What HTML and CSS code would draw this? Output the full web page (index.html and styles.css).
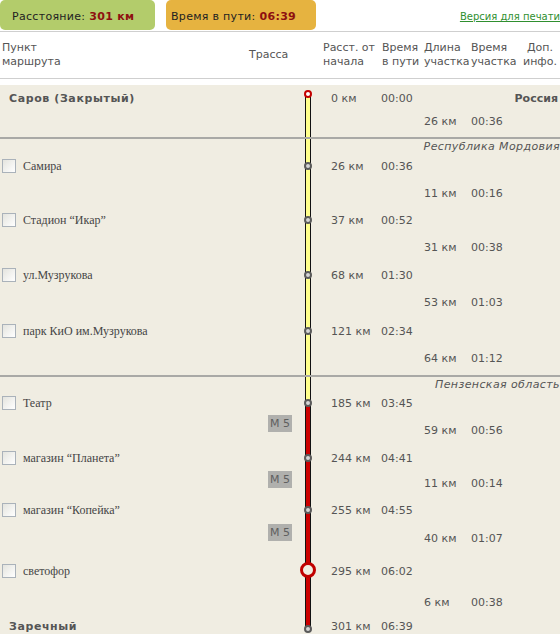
FILE: index.html
```html
<!DOCTYPE html>
<html lang="ru">
<head>
<meta charset="utf-8">
<title>Маршрут</title>
<link rel="stylesheet" href="styles.css">
</head>
<body>
<div class="page">
  <div class="top">
    <div class="pill pill-green">Расстояние: <b>301 км</b></div>
    <div class="pill pill-orange">Время в пути: <b>06:39</b></div>
    <a class="print" href="#">Версия для печати</a>
  </div>

  <div class="head">
    <div class="h-name">Пункт<br>маршрута</div>
    <div class="h-track">Трасса</div>
    <div>Расст. от<br>начала</div>
    <div class="h-time">Время<br>в пути</div>
    <div>Длина<br>участка</div>
    <div>Время<br>участка</div>
    <div class="h-info">Доп.<br>инфо.</div>
  </div>

  <div class="body">
    <div class="row h26">
      <div class="name bold">Саров (Закрытый)</div>
      <div class="track"><span class="rail start"><i class="mk mk-start"></i></span></div>
      <div class="dist">0 км</div><div class="time">00:00</div>
      <div class="country">Россия</div>
    </div>
    <div class="row h20">
      <div class="track"><span class="rail y"></span></div>
      <div class="slen">26 км</div><div class="stime">00:36</div>
    </div>
    <div class="row sep h8">
      <div class="track"><span class="rail y"></span></div>
    </div>
    <div class="row h15">
      <div class="track"><span class="rail y"></span></div>
      <div class="region">Республика Мордовия</div>
    </div>

    <div class="row h24">
      <div class="name"><span class="cb"></span>Самира</div>
      <div class="track"><span class="rail y"><i class="mk"></i></span></div>
      <div class="dist">26 км</div><div class="time">00:36</div>
    </div>
    <div class="row h30">
      <div class="track"><span class="rail y"></span></div>
      <div class="slen">11 км</div><div class="stime">00:16</div>
    </div>

    <div class="row h24">
      <div class="name"><span class="cb"></span>Стадион “Икар”</div>
      <div class="track"><span class="rail y"><i class="mk"></i></span></div>
      <div class="dist">37 км</div><div class="time">00:52</div>
    </div>
    <div class="row h30">
      <div class="track"><span class="rail y"></span></div>
      <div class="slen">31 км</div><div class="stime">00:38</div>
    </div>

    <div class="row h26">
      <div class="name"><span class="cb"></span>ул.Музрукова</div>
      <div class="track"><span class="rail y"><i class="mk"></i></span></div>
      <div class="dist">68 км</div><div class="time">01:30</div>
    </div>
    <div class="row h28">
      <div class="track"><span class="rail y"></span></div>
      <div class="slen">53 км</div><div class="stime">01:03</div>
    </div>

    <div class="row h30">
      <div class="name"><span class="cb"></span>парк КиО им.Музрукова</div>
      <div class="track"><span class="rail y"><i class="mk"></i></span></div>
      <div class="dist">121 км</div><div class="time">02:34</div>
    </div>
    <div class="row h24">
      <div class="track"><span class="rail y"></span></div>
      <div class="slen">64 км</div><div class="stime">01:12</div>
    </div>
    <div class="row sep h7">
      <div class="track"><span class="rail y"></span></div>
    </div>
    <div class="row h14">
      <div class="track"><span class="rail y"></span></div>
      <div class="region">Пензенская область</div>
    </div>

    <div class="row h24">
      <div class="name"><span class="cb"></span>Театр</div>
      <div class="track"><span class="rail yr"><i class="mk"></i></span></div>
      <div class="dist">185 км</div><div class="time">03:45</div>
    </div>
    <div class="row h30">
      <div class="track"><span class="badge">M 5</span><span class="rail r"></span></div>
      <div class="slen">59 км</div><div class="stime">00:56</div>
    </div>

    <div class="row h26">
      <div class="name"><span class="cb"></span>магазин “Планета”</div>
      <div class="track"><span class="rail r"><i class="mk"></i></span></div>
      <div class="dist">244 км</div><div class="time">04:41</div>
    </div>
    <div class="row h25">
      <div class="track"><span class="badge">M 5</span><span class="rail r"></span></div>
      <div class="slen">11 км</div><div class="stime">00:14</div>
    </div>

    <div class="row h28">
      <div class="name"><span class="cb"></span>магазин “Копейка”</div>
      <div class="track"><span class="rail r"><i class="mk"></i></span></div>
      <div class="dist">255 км</div><div class="time">04:55</div>
    </div>
    <div class="row h28">
      <div class="track"><span class="badge">M 5</span><span class="rail r"></span></div>
      <div class="slen">40 км</div><div class="stime">01:07</div>
    </div>

    <div class="row h38">
      <div class="name"><span class="cb"></span>светофор</div>
      <div class="track"><span class="rail r"><i class="mk mk-big"></i></span></div>
      <div class="dist">295 км</div><div class="time">06:02</div>
    </div>
    <div class="row h24">
      <div class="track"><span class="rail r"></span></div>
      <div class="slen">6 км</div><div class="stime">00:38</div>
    </div>

    <div class="row h24">
      <div class="name bold">Заречный</div>
      <div class="track"><span class="rail end"><i class="mk mk-end"></i></span></div>
      <div class="dist">301 км</div><div class="time">06:39</div>
    </div>
  </div>
</div>
</body>
</html>
```

FILE: styles.css
```css
html, body {
  margin: 0;
  padding: 0;
  overflow: hidden;
  background: #ffffff;
}

body {
  font-family: "DejaVu Sans", Verdana, sans-serif;
  font-size: 11px;
  color: #555555;
}

.page {
  width: 562px;
}

/* ---------- top bar ---------- */
.top {
  display: flex;
  height: 31px;
  border-bottom: 1px solid #cfcfcf;
}

.pill {
  height: 30px;
  box-sizing: border-box;
  display: flex;
  align-items: center;
  padding-top: 2px;
  border-radius: 5px;
  color: #222222;
  letter-spacing: 0.3px;
  white-space: nowrap;
}

.pill b {
  color: #8e1010;
  margin-left: 4px;
}

.pill-green {
  width: 155px;
  padding-left: 12px;
  background: #b3cc6b;
}

.pill-orange {
  width: 150px;
  margin-left: 11px;
  padding-left: 5px;
  background: #e6b340;
}

.print {
  margin-left: auto;
  padding-top: 11px;
  padding-right: 2px;
  font-size: 10px;
  color: #2f8f2f;
  text-decoration: underline;
  white-space: nowrap;
}

/* ---------- header ---------- */
.head {
  display: grid;
  grid-template-columns: 249px 74px 58px 43px 47px 47px 44px;
  height: 46px;
  align-items: center;
  line-height: 14px;
  border-bottom: 1px solid #cfcfcf;
  white-space: nowrap;
}

.h-name {
  padding-left: 2px;
}

.h-time {
  padding-left: 1px;
}

.h-info {
  text-align: center;
}

/* ---------- body ---------- */
.body {
  margin-top: 6px;
  background: #f0ede2;
}

.row {
  display: grid;
  grid-template-columns: 265px 58px 58px 43px 47px 61px 30px;
  align-items: center;
  white-space: nowrap;
}

.h7 { height: 5px; }
.h8 { height: 6px; }
.h14 { height: 14px; }
.h15 { height: 15px; }
.h20 { height: 20px; }
.h24 { height: 24px; }
.h25 { height: 25px; }
.h26 { height: 26px; }
.h28 { height: 28px; }
.h30 { height: 30px; }
.h38 { height: 38px; }

.sep {
  border-bottom: 2px solid #a9a9a6;
}

.name {
  grid-column: 1;
  display: flex;
  align-items: center;
  gap: 7px;
  padding-left: 2px;
  font-family: "Liberation Serif", "Times New Roman", serif;
  font-size: 12px;
  color: #454545;
}

.name.bold {
  padding-left: 9px;
  font-family: "DejaVu Sans", Verdana, sans-serif;
  font-size: 11px;
  font-weight: bold;
  letter-spacing: 0.6px;
  color: #555555;
}

.cb {
  width: 14px;
  height: 14px;
  box-sizing: border-box;
  border: 1px solid #aab2ba;
  background: linear-gradient(135deg, #e4e4de, #ffffff);
  flex: none;
}

.track {
  grid-column: 2;
  grid-row: 1;
  align-self: stretch;
  display: grid;
  grid-template-columns: 40px 6px;
}

.badge {
  grid-column: 1;
  align-self: start;
  justify-self: start;
  margin-left: 3px;
  width: 24px;
  height: 17px;
  line-height: 17px;
  text-align: center;
  background: #b0b0ad;
  color: #5f5f5f;
}

.rail {
  grid-column: 2;
  position: relative;
  --ylw: linear-gradient(to right, #111 0 1px, #ffff8c 1px 5px, #111 5px 6px);
  --red: linear-gradient(to right, #111 0 1px, #cc0000 1px 5px, #111 5px 6px);
  background-repeat: no-repeat;
}

.rail.y { background-image: var(--ylw); }
.rail.r { background-image: var(--red); }

.rail.yr {
  background-image: var(--ylw), var(--red);
  background-size: 6px 50%, 6px 50%;
  background-position: top, bottom;
}

.rail.start {
  background-image: var(--ylw);
  background-size: 6px calc(100% - 9px);
  background-position: bottom;
}

.rail.end {
  background-image: var(--red);
  background-size: 6px 15px;
  background-position: top;
}

.mk {
  position: absolute;
  left: -1px;
  top: 50%;
  width: 8px;
  height: 8px;
  margin-top: -4px;
  box-sizing: border-box;
  border: 2px solid #5a5a5a;
  border-radius: 50%;
  background: #d6d6d6;
}

.mk-start {
  top: 9px;
  border-color: #c40000;
  background: #ffffff;
}

.mk-end {
  top: 15px;
}

.mk-big {
  left: -5px;
  width: 16px;
  height: 16px;
  margin-top: -9px;
  border: 3px solid #c00000;
  background: #f0ede2;
}

.dist {
  grid-column: 3;
  padding-left: 8px;
}

.time {
  grid-column: 4;
}

.slen {
  grid-column: 5;
}

.stime {
  grid-column: 6;
}

.country {
  grid-column: 6 / 8;
  justify-self: end;
  padding-right: 4px;
  font-weight: bold;
}

.region {
  grid-column: 3 / 8;
  justify-self: end;
  padding-right: 2px;
  font-style: italic;
  letter-spacing: 0.4px;
}
```
